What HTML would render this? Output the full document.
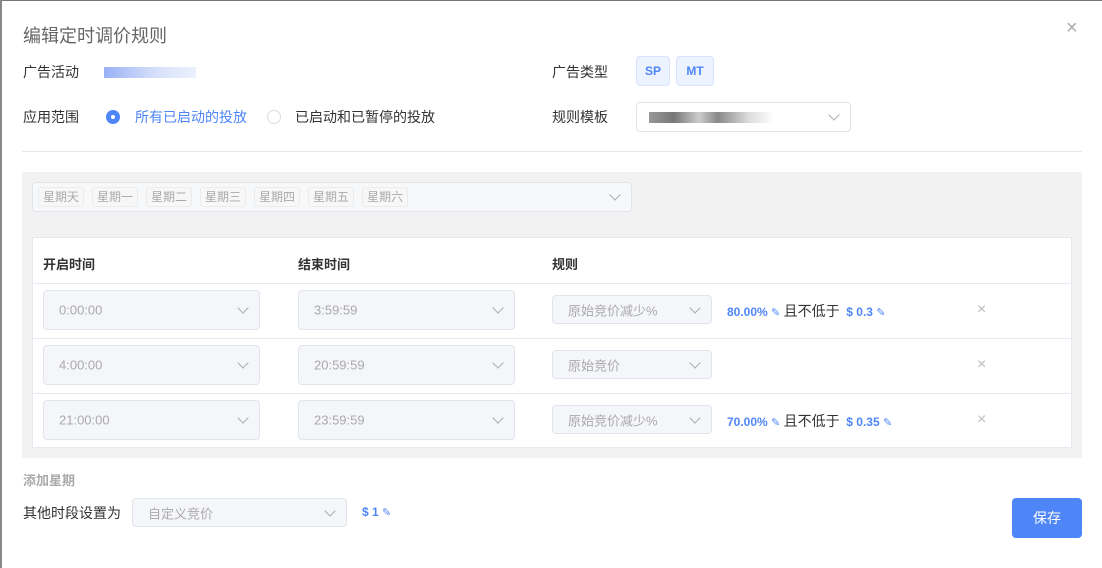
<!DOCTYPE html>
<html><head><meta charset="utf-8"><style>
*{box-sizing:border-box;margin:0;padding:0}
body{width:1102px;height:568px;overflow:hidden;background:#fff;font-family:"Liberation Sans","Noto Sans CJK SC",sans-serif;font-size:14px;color:#333;position:relative}
.a{position:absolute}
.lbl{position:absolute;font-size:14px;color:#333;line-height:20px}
.sel{position:absolute;border:1px solid #e1e4ea;border-radius:4px;background:#f5f6fa;color:#aaa;font-size:13px}
.sel span{position:absolute;left:15px;top:50%;transform:translateY(-50%)}
.chev{position:absolute;right:12px;top:50%;width:8px;height:8px;border-right:1px solid #aaa;border-bottom:1px solid #aaa;transform:translateY(-75%) rotate(45deg)}
.blue{color:#4f86f7;font-weight:bold}
.x{position:absolute;color:#bbb;font-size:16px}
.tag{position:absolute;top:187px;height:20px;border:1px solid #ececec;border-radius:3px;background:#f7f7f7;color:#aaa;font-size:12px;line-height:18px;padding:0 4px}
.row{position:absolute;left:0;width:1040px;border-top:1px solid #e6e9f0}
.pen{display:inline-block;font-size:11px;color:#4f86f7;font-weight:normal}
</style></head><body>
<div class="a" style="left:0;top:0;width:1102px;height:1px;background:#777"></div>
<div class="a" style="left:0;top:0;width:2px;height:568px;background:#888"></div>

<div class="a" style="left:23px;top:22px;font-size:18px;color:#666">编辑定时调价规则</div>
<div class="a" style="left:1066px;top:17px;color:#aaa;font-size:20px;font-weight:300">×</div>

<div class="lbl" style="left:23px;top:62px">广告活动</div>
<div class="a" style="left:104px;top:67px;width:92px;height:11px;background:linear-gradient(90deg,#6d8ff0 0,#9db4f5 30%,#c9d6fa 60%,#e4eafc 100%);opacity:.7"></div>
<div class="lbl" style="left:552px;top:62px">广告类型</div>
<div class="a" style="left:636px;top:56px;width:34px;height:30px;border:1px solid #d6e3fb;border-radius:4px;background:#ecf2fe;color:#4f86f7;font-size:12px;text-align:center;line-height:28px;font-weight:bold">SP</div>
<div class="a" style="left:676px;top:56px;width:38px;height:30px;border:1px solid #d6e3fb;border-radius:4px;background:#ecf2fe;color:#4f86f7;font-size:12px;text-align:center;line-height:28px;font-weight:bold">MT</div>

<div class="lbl" style="left:23px;top:107px">应用范围</div>
<div class="a" style="left:106px;top:110px;width:14px;height:14px;border-radius:50%;background:#4f86f7"></div>
<div class="a" style="left:111px;top:115px;width:4px;height:4px;border-radius:50%;background:#fff"></div>
<div class="lbl" style="left:135px;top:107px;color:#4f86f7">所有已启动的投放</div>
<div class="a" style="left:267px;top:110px;width:14px;height:14px;border-radius:50%;border:1px solid #ddd"></div>
<div class="lbl" style="left:295px;top:107px">已启动和已暂停的投放</div>
<div class="lbl" style="left:552px;top:107px">规则模板</div>
<div class="a" style="left:636px;top:102px;width:215px;height:30px;border:1px solid #e1e4ea;border-radius:4px;background:#fff"><div class="a" style="left:12px;top:9px;width:125px;height:11px;background:linear-gradient(90deg,#999,#777 20%,#ccc 40%,#888 55%,#ddd 80%,#fff)"></div><div class="chev"></div></div>

<div class="a" style="left:22px;top:151px;width:1060px;height:1px;background:#e8e8e8"></div>

<div class="a" style="left:22px;top:172px;width:1060px;height:286px;background:#f2f2f2"></div>
<div class="a" style="left:32px;top:182px;width:600px;height:30px;border:1px solid #e1e4ea;border-radius:4px;background:#f7f8fa"><div class="chev"></div></div>
<div class="tag" style="left:38px">星期天</div>
<div class="tag" style="left:92px">星期一</div>
<div class="tag" style="left:146px">星期二</div>
<div class="tag" style="left:200px">星期三</div>
<div class="tag" style="left:254px">星期四</div>
<div class="tag" style="left:308px">星期五</div>
<div class="tag" style="left:362px">星期六</div>

<div class="a" style="left:32px;top:237px;width:1040px;height:211px;background:#fff;border:1px solid #e6e9f0">
 <div class="a" style="left:10px;top:16px;font-size:13px;font-weight:bold;color:#333">开启时间</div>
 <div class="a" style="left:265px;top:16px;font-size:13px;font-weight:bold;color:#333">结束时间</div>
 <div class="a" style="left:519px;top:16px;font-size:13px;font-weight:bold;color:#333">规则</div>
 <div class="row" style="top:45px"></div>
 <div class="row" style="top:100px"></div>
 <div class="row" style="top:155px"></div>
</div>

<div class="sel" style="left:43px;top:290px;width:217px;height:40px"><span>0:00:00</span><div class="chev"></div></div>
<div class="sel" style="left:298px;top:290px;width:217px;height:40px"><span>3:59:59</span><div class="chev"></div></div>
<div class="sel" style="left:552px;top:295px;width:160px;height:29px"><span>原始竞价减少%</span><div class="chev"></div></div>
<div class="a" style="left:727px;top:301px;font-size:12px"><span class="blue">80.00% <span class="pen">✎</span></span> <span style="font-size:14px;color:#333">且不低于</span> <span class="blue">&nbsp;$ 0.3 <span class="pen">✎</span></span></div>
<div class="x" style="left:977px;top:301px">×</div>

<div class="sel" style="left:43px;top:345px;width:217px;height:40px"><span>4:00:00</span><div class="chev"></div></div>
<div class="sel" style="left:298px;top:345px;width:217px;height:40px"><span>20:59:59</span><div class="chev"></div></div>
<div class="sel" style="left:552px;top:350px;width:160px;height:29px"><span>原始竞价</span><div class="chev"></div></div>
<div class="x" style="left:977px;top:356px">×</div>

<div class="sel" style="left:43px;top:400px;width:217px;height:40px"><span>21:00:00</span><div class="chev"></div></div>
<div class="sel" style="left:298px;top:400px;width:217px;height:40px"><span>23:59:59</span><div class="chev"></div></div>
<div class="sel" style="left:552px;top:405px;width:160px;height:29px"><span>原始竞价减少%</span><div class="chev"></div></div>
<div class="a" style="left:727px;top:411px;font-size:12px"><span class="blue">70.00% <span class="pen">✎</span></span> <span style="font-size:14px;color:#333">且不低于</span> <span class="blue">&nbsp;$ 0.35 <span class="pen">✎</span></span></div>
<div class="x" style="left:977px;top:411px">×</div>

<div class="a" style="left:23px;top:470px;font-size:13px;color:#aaa;font-weight:bold">添加星期</div>
<div class="lbl" style="left:23px;top:503px">其他时段设置为</div>
<div class="sel" style="left:132px;top:498px;width:215px;height:29px"><span>自定义竞价</span><div class="chev"></div></div>
<div class="a blue" style="left:362px;top:505px;font-size:12px">$ 1 <span class="pen">✎</span></div>
<div class="a" style="left:1012px;top:498px;width:70px;height:40px;border-radius:4px;background:#4f86f7;color:#fff;font-size:14px;text-align:center;line-height:40px">保存</div>
</body></html>
